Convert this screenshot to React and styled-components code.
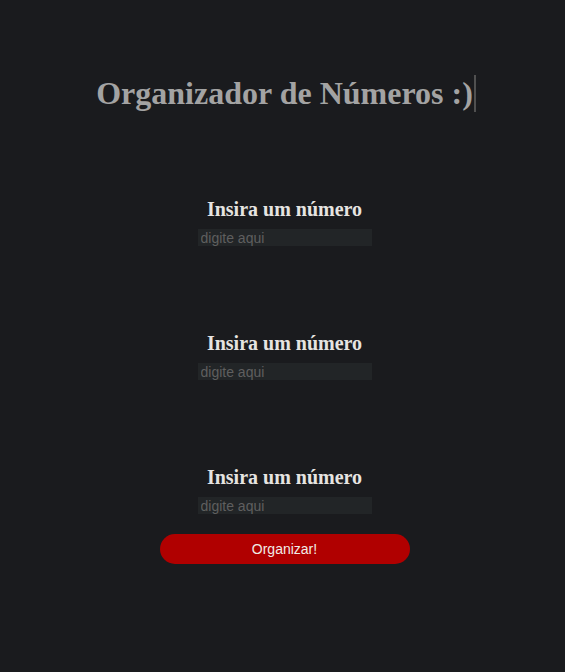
import React from "react";
import styled, { createGlobalStyle } from "styled-components";

const GlobalStyle = createGlobalStyle`
  html, body {
    margin: 0;
    padding: 0;
    background: #1a1b1e;
  }
`;

const Page = styled.main`
  min-height: 672px;
  background: #1a1b1e;
  display: flex;
  flex-direction: column;
  align-items: center;
  padding: 75px 0 0 4px;
  box-sizing: border-box;
`;

const Title = styled.h1`
  margin: 0 0 0 3px;
  font-family: "Liberation Serif", "Times New Roman", serif;
  font-weight: bold;
  font-size: 32px;
  line-height: 37px;
  color: #a3a3a3;
  border-right: 2px solid #505050;
  padding-right: 1px;
`;

const Fields = styled.div`
  display: flex;
  flex-direction: column;
  align-items: center;
  gap: 85px;
  margin-top: 85px;
`;

const Field = styled.div`
  display: flex;
  flex-direction: column;
  align-items: center;
`;

const Label = styled.label`
  font-family: "Liberation Serif", "Times New Roman", serif;
  font-weight: bold;
  font-size: 20px;
  line-height: 24px;
  color: #e6e4e1;
  margin-bottom: 8px;
`;

const Input = styled.input`
  width: 174px;
  height: 17px;
  box-sizing: border-box;
  border: none;
  outline: none;
  background: #222527;
  padding: 0 3px;
  font-family: "Liberation Sans", Arial, sans-serif;
  font-size: 14px;
  color: #cfcfcf;

  &::placeholder {
    color: #5f5f5f;
  }
`;

const Button = styled.button`
  margin-top: 20px;
  width: 250px;
  height: 30px;
  border: none;
  border-radius: 15px;
  background: #b00000;
  color: #f0ece6;
  font-family: "Liberation Sans", Arial, sans-serif;
  font-size: 14px;
  cursor: pointer;
`;

export default function App() {
  return (
    <>
      <GlobalStyle />
      <Page>
        <Title>Organizador de Números :)</Title>
        <Fields>
          {[1, 2, 3].map((n) => (
            <Field key={n}>
              <Label htmlFor={`num${n}`}>Insira um número</Label>
              <Input id={`num${n}`} type="text" placeholder="digite aqui" />
            </Field>
          ))}
        </Fields>
        <Button>Organizar!</Button>
      </Page>
    </>
  );
}
